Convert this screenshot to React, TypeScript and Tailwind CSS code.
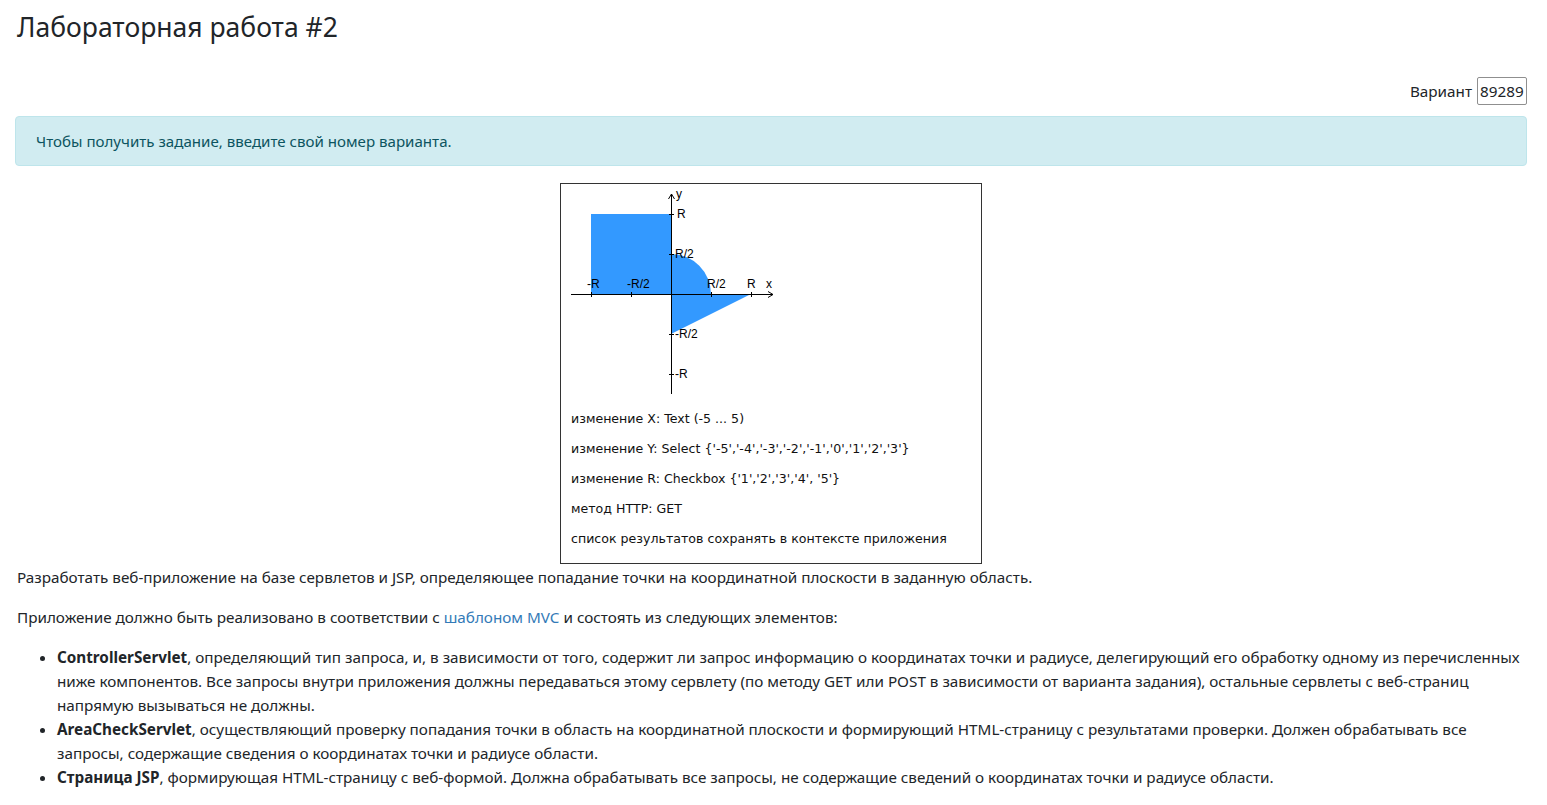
import React from 'react';

const bodyFont = { fontFamily: '"Noto Sans", "Open Sans", sans-serif' };

function AreaPlot() {
  // origin of the plot is at (110, 110), R = 80px
  return (
    <svg width="220" height="220" viewBox="0 0 220 220" className="block" shapeRendering="crispEdges">
      <rect x="30" y="30" width="80" height="80" fill="#3399ff" />
      <path d="M110 110 L110 70 A40 40 0 0 1 150 110 Z" fill="#3399ff" shapeRendering="auto" />
      <path d="M110 110 L190 110 L110 150 Z" fill="#3399ff" shapeRendering="auto" />

      <g stroke="#000" strokeWidth="1">
        <line x1="10" y1="110.5" x2="212" y2="110.5" />
        <line x1="110.5" y1="10" x2="110.5" y2="210" />
        <path d="M207 107.5 L212 110.5 L207 113.5" fill="none" shapeRendering="auto" />
        <path d="M107.5 15 L110.5 10 L113.5 15" fill="none" shapeRendering="auto" />
        {/* ticks on x axis */}
        <line x1="30.5" y1="108" x2="30.5" y2="113" />
        <line x1="70.5" y1="108" x2="70.5" y2="113" />
        <line x1="150.5" y1="108" x2="150.5" y2="113" />
        <line x1="190.5" y1="108" x2="190.5" y2="113" />
        {/* ticks on y axis */}
        <line x1="108" y1="30.5" x2="113" y2="30.5" />
        <line x1="108" y1="70.5" x2="113" y2="70.5" />
        <line x1="108" y1="150.5" x2="113" y2="150.5" />
        <line x1="108" y1="190.5" x2="113" y2="190.5" />
      </g>

      <g fill="#000" fontSize="12" style={{ fontFamily: '"Liberation Sans", Arial, sans-serif' }}>
        <text x="26" y="104">-R</text>
        <text x="66" y="104">-R/2</text>
        <text x="146" y="104">R/2</text>
        <text x="186" y="104">R</text>
        <text x="205" y="104">x</text>
        <text x="115" y="14">y</text>
        <text x="116" y="34">R</text>
        <text x="114" y="74">R/2</text>
        <text x="114" y="154">-R/2</text>
        <text x="114" y="194">-R</text>
      </g>
    </svg>
  );
}

const variantLines = [
  "изменение X: Text (-5 ... 5)",
  "изменение Y: Select {'-5','-4','-3','-2','-1','0','1','2','3'}",
  "изменение R: Checkbox {'1','2','3','4', '5'}",
  'метод HTTP: GET',
  'список результатов сохранять в контексте приложения',
];

export default function App() {
  return (
    <div className="min-h-screen bg-white pl-[15px] pr-[20px] text-[15.25px] leading-[24px] text-[#212529]" style={bodyFont}>
      <h3 className="pt-[10px] pl-[2px] text-[26.5px] leading-[34px] font-normal">Лабораторная работа #2</h3>

      <div className="mt-[33px] flex items-center justify-end gap-[5px]">
        <label htmlFor="variant">Вариант</label>
        <input
          id="variant"
          defaultValue="89289"
          className="h-[28px] w-[50px] rounded-[2px] border border-[#8f8f8f] px-[2px] text-[15.25px] text-[#212529] outline-none"
          style={bodyFont}
        />
      </div>

      <div className="mt-[11px] rounded-[4px] border border-[#bee5eb] bg-[#d1ecf1] px-[20px] py-[12px] text-[15.1px] text-[#0c5460]">
        Чтобы получить задание, введите свой номер варианта.
      </div>

      <div className="mt-[17px] flex justify-center">
        <div className="w-[422px] border border-[#333]">
          <AreaPlot />
          <div
            className="flex flex-col gap-[15px] px-[10px] pt-[7px] pb-[17px] text-[12.6px] leading-[15px] text-[#111]"
            style={{ fontFamily: '"DejaVu Sans", Verdana, sans-serif' }}
          >
            {variantLines.map((line, i) => (
              <p key={i}>{line}</p>
            ))}
          </div>
        </div>
      </div>

      <p className="mt-[1px] pl-[2px]">
        Разработать веб-приложение на базе сервлетов и JSP, определяющее попадание точки на координатной плоскости в заданную область.
      </p>
      <p className="mt-[16px] pl-[2px]">
        Приложение должно быть реализовано в соответствии с{' '}
        <a href="#" className="text-[#337ab7]">шаблоном MVC</a> и состоять из следующих элементов:
      </p>

      <ul className="mt-[16px] list-disc pl-[42px]">
        <li>
          <strong className="font-bold">ControllerServlet</strong>, определяющий тип запроса, и, в зависимости от того, содержит ли запрос информацию о координатах точки и радиусе, делегирующий его обработку одному из перечисленных ниже компонентов. Все запросы внутри приложения должны передаваться этому сервлету (по методу GET или POST в зависимости от варианта задания), остальные сервлеты с веб-страниц напрямую вызываться не должны.
        </li>
        <li>
          <strong className="font-bold">AreaCheckServlet</strong>, осуществляющий проверку попадания точки в область на координатной плоскости и формирующий HTML-страницу с результатами проверки. Должен обрабатывать все запросы, содержащие сведения о координатах точки и радиусе области.
        </li>
        <li>
          <strong className="font-bold">Страница JSP</strong>, формирующая HTML-страницу с веб-формой. Должна обрабатывать все запросы, не содержащие сведений о координатах точки и радиусе области.
        </li>
      </ul>
    </div>
  );
}
